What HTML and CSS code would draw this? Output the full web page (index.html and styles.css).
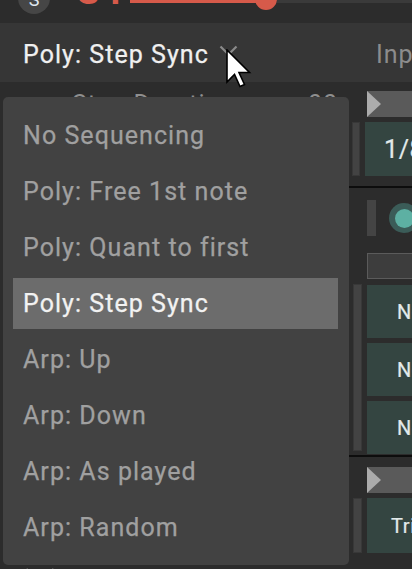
FILE: index.html
```html
<!DOCTYPE html>
<html>
<head>
<meta charset="utf-8">
<link rel="stylesheet" href="styles.css">
</head>
<body>
<div class="app">
  <div class="topbar">
    <div class="avatar">S</div>
    <div class="title">ST</div>
    <div class="slider"><div class="knob"></div></div>
  </div>
  <div class="header">
    <div class="mode">Poly: Step Sync</div>
    <svg class="chev" width="20" height="12" viewBox="0 0 20 12"><polyline points="1.5,1.5 9.5,9.5 17.5,1.5" fill="none" stroke="#8a8a8a" stroke-width="2.2"/></svg>
    <div class="inp">Input</div>
  </div>
  <div class="main">
    <div class="left">
      <div class="param"><span class="pname">Step Duration</span><span class="pval">00</span></div>
      <div class="foot">
        <svg width="40" height="20" viewBox="0 0 40 20"><path d="M8 4 A10 10 0 0 0 8 18" fill="none" stroke="#8a8a8a" stroke-width="2.5"/><path d="M13 6 A6 6 0 0 0 13 16" fill="none" stroke="#8a8a8a" stroke-width="2.5"/><path d="M27 6 A6 6 0 0 1 27 16" fill="none" stroke="#8a8a8a" stroke-width="2.5"/><path d="M32 4 A10 10 0 0 1 32 18" fill="none" stroke="#8a8a8a" stroke-width="2.5"/></svg>
      </div>
    </div>
    <div class="right">
      <div class="sec sec1">
        <div class="play"><svg width="14" height="26" viewBox="0 0 14 26"><polygon points="0,0 14,13 0,26" fill="#acacac"/></svg></div>
        <div class="row r1">
          <div class="vslider"></div>
          <div class="btn big">1/8</div>
        </div>
      </div>
      <div class="divider"></div>
      <div class="sec sec2">
        <div class="toprow">
          <div class="minibar"></div>
          <div class="dot"><div class="dot-in"></div></div>
        </div>
        <div class="outline"></div>
        <div class="row r2">
          <div class="vslider tall"></div>
          <div class="btns">
            <div class="btn">Note</div>
            <div class="btn">Note</div>
            <div class="btn">Note</div>
          </div>
        </div>
      </div>
      <div class="divider"></div>
      <div class="sec sec3">
        <div class="play"><svg width="14" height="26" viewBox="0 0 14 26"><polygon points="0,0 14,13 0,26" fill="#acacac"/></svg></div>
        <div class="row r3">
          <div class="vslider"></div>
          <div class="btn tri">Trigger</div>
        </div>
      </div>
    </div>
  </div>

  <div class="menu">
    <div class="item">No Sequencing</div>
    <div class="item">Poly: Free 1st note</div>
    <div class="item">Poly: Quant to first</div>
    <div class="item active">Poly: Step Sync</div>
    <div class="item">Arp: Up</div>
    <div class="item">Arp: Down</div>
    <div class="item">Arp: As played</div>
    <div class="item">Arp: Random</div>
  </div>

  <svg class="cursor" width="26" height="40" viewBox="0 0 26 40"><polygon points="1,1 1,33 8.5,25.5 14,37.5 18.5,35.5 13,23.5 23.5,23.5" fill="#ffffff" stroke="#000000" stroke-width="1.6" stroke-linejoin="miter"/></svg>
</div>
</body>
</html>
```

FILE: styles.css
```css
* { box-sizing: border-box; margin: 0; padding: 0; }
html, body { width: 412px; height: 569px; overflow: hidden; }
body {
  background: #2c2c2c;
  font-family: Roboto, "Liberation Sans", sans-serif;
}
.app {
  position: relative;
  display: flex;
  flex-direction: column;
  width: 412px;
  height: 569px;
  overflow: hidden;
}

/* top bar */
.topbar {
  flex: none;
  height: 23px;
  display: flex;
  align-items: flex-start;
  background: #2c2c2c;
}
.avatar {
  flex: none;
  width: 32px;
  height: 32px;
  margin: -18px 0 0 18px;
  border-radius: 50%;
  background: #464646;
  color: #dfe6f0;
  font-size: 18px;
  line-height: 1;
  text-align: center;
  padding-top: 9px;
}
.title {
  flex: none;
  width: 30px;
  margin: -26px 0 0 27px;
  color: #d65a4a;
  font-weight: 700;
  font-size: 36px;
  letter-spacing: 5px;
  line-height: 36px;
  white-space: nowrap;
}
.slider {
  position: relative;
  flex: 1;
  margin-left: 23px;
  height: 3px;
  background: linear-gradient(to right, #d65a4a 0 136px, #3a3a3a 136px);
}
.knob {
  position: absolute;
  left: 125px;
  top: -12px;
  width: 22px;
  height: 22px;
  border-radius: 50%;
  background: #d65a4a;
}

/* header */
.header {
  flex: none;
  height: 59px;
  display: flex;
  align-items: center;
  padding: 4px 0 0 23px;
  background: #363636;
}
.mode {
  color: #f0f0f0;
  font-size: 25px;
  letter-spacing: 1.05px;
  line-height: 30px;
  white-space: nowrap;
  -webkit-text-stroke: 0.25px #f0f0f0;
}
.chev {
  flex: none;
  margin: -8px 0 0 10px;
}
.inp {
  margin-left: auto;
  width: 36px;
  overflow: hidden;
  white-space: nowrap;
  color: #8c8c8c;
  font-size: 25px;
  letter-spacing: 1px;
  line-height: 30px;
}

/* main */
.main {
  flex: 1;
  display: flex;
  min-height: 0;
}
.left {
  width: 349px;
  flex: none;
  display: flex;
  flex-direction: column;
  justify-content: space-between;
}
.param {
  display: flex;
  margin-top: 9px;
  padding: 0 11px 0 72px;
  color: #8e8e8e;
  font-size: 25px;
  letter-spacing: 1px;
  line-height: 28px;
}
.pval { margin-left: auto; }
.foot {
  height: 4px;
  overflow: visible;
  padding-left: 20px;
}
.right {
  width: 63px;
  flex: none;
  display: flex;
  flex-direction: column;
}
.divider {
  flex: none;
  height: 2px;
  background: #0d0d0d;
}
.sec1 { height: 104px; padding-top: 9px; }
.sec2 { height: 267px; padding-top: 12px; }
.sec3 { flex: 1; padding-top: 10px; }

.play {
  height: 26px;
  margin-left: 18px;
  background: #5a5a5a;
  display: flex;
}
.row { display: flex; margin-top: 5px; }
.r1 { height: 54px; }
.r3 { height: 55px; }
.vslider {
  flex: none;
  width: 9px;
  margin-left: 4px;
  background: #434343;
  border: 1px solid #383838;
}
.r1 .vslider { margin-left: 3px; width: 8px; }
.btn {
  flex: 1;
  margin-left: 5px;
  background: #344541;
  color: #e2eaea;
  display: flex;
  align-items: center;
  white-space: nowrap;
  overflow: hidden;
  font-size: 20px;
  letter-spacing: 0.6px;
  padding-left: 30px;
  -webkit-text-stroke: 0.2px #e2eaea;
}
.btn.big {
  margin-left: 5px;
  font-size: 25px;
  padding-left: 19px;
}
.btn.tri { padding-left: 24px; }

.toprow {
  display: flex;
  height: 36px;
}
.minibar {
  flex: none;
  width: 9px;
  height: 36px;
  margin-left: 18px;
  background: #444444;
}
.dot {
  flex: none;
  width: 30px;
  height: 30px;
  margin: 3px 0 0 13px;
  border-radius: 50%;
  background: #3b5c58;
  display: flex;
  align-items: center;
  justify-content: center;
}
.dot-in {
  width: 19px;
  height: 19px;
  border-radius: 50%;
  background: #5db0a3;
}
.outline {
  height: 26px;
  margin: 17px 0 0 18px;
  border: 1px solid #5b5b5b;
  border-right: none;
  background: #3d3d3d;
}
.r2 { margin-top: 5px; height: 170px; }
.r2 .vslider { height: 167px; }
.btns {
  flex: 1;
  display: flex;
  flex-direction: column;
  gap: 5px;
  margin-top: 1px;
  margin-left: 5px;
}
.btns .btn { margin-left: 0; flex: none; height: 53px; }

/* dropdown menu */
.menu {
  position: absolute;
  left: 3px;
  top: 97px;
  width: 346px;
  height: 468px;
  background: #424242;
  border-radius: 5px;
  padding: 13px 11px 12px 10px;
  display: flex;
  flex-direction: column;
  gap: 5px;
}
.item {
  height: 51px;
  line-height: 51px;
  padding-left: 10px;
  color: #a0a0a0;
  font-size: 25px;
  letter-spacing: 1.05px;
  white-space: nowrap;
  -webkit-text-stroke: 0.25px #a0a0a0;
}
.item.active {
  background: #6c6c6c;
  color: #f2f2f2;
  -webkit-text-stroke: 0.25px #f2f2f2;
}

.cursor {
  position: absolute;
  left: 226px;
  top: 49px;
}
```
